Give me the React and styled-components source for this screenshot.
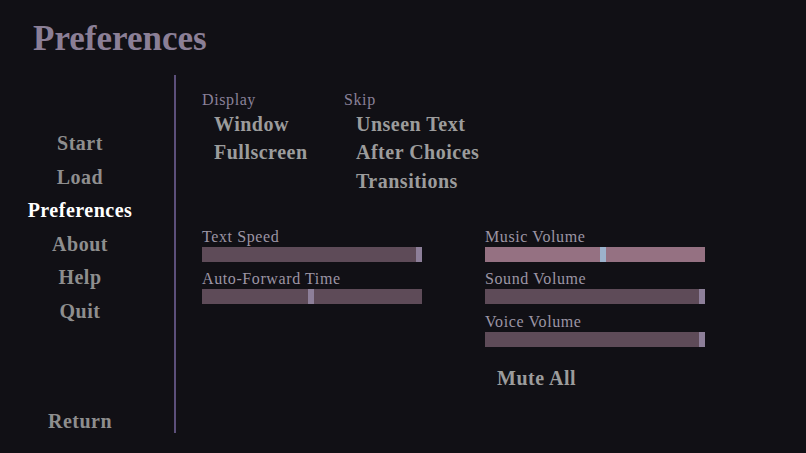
import React from "react";
import styled, { createGlobalStyle } from "styled-components";

const Global = createGlobalStyle`
  html, body { margin: 0; padding: 0; background: #111015; }
  #root { width: 806px; height: 453px; }
`;

const Screen = styled.div`
  width: 806px;
  height: 453px;
  background: #111015;
  font-family: "Liberation Serif", "Times New Roman", serif;
  display: flex;
  flex-direction: column;
  overflow: hidden;
`;

const Title = styled.h1`
  margin: 0;
  padding: 19px 0 0 33px;
  height: 75px;
  flex: none;
  box-sizing: border-box;
  font-size: 35px;
  line-height: 40px;
  font-weight: bold;
  color: #8b7f96;
`;

const Body = styled.div`
  flex: 1;
  display: flex;
  align-items: flex-start;
`;

const Nav = styled.nav`
  width: 160px;
  height: 378px;
  box-sizing: border-box;
  padding: 52px 0 15px;
  display: flex;
  flex-direction: column;
  align-items: center;
`;

const NavItem = styled.div`
  font-size: 20px;
  line-height: 33.5px;
  font-weight: bold;
  letter-spacing: 0.5px;
  color: ${(p) => (p.$active ? "#ffffff" : "#8e8e8e")};
`;

const NavBottom = styled.div`
  margin-top: auto;
`;

const Divider = styled.div`
  width: 2px;
  height: 358px;
  margin-left: 14px;
  background: #5c4f7a;
`;

const Content = styled.div`
  margin-left: 26px;
  padding-top: 14.6px;
  display: flex;
  flex-direction: column;
`;

const Groups = styled.div`
  display: grid;
  grid-template-columns: 142px auto;
`;

const Group = styled.div`
  display: flex;
  flex-direction: column;
`;

const Label = styled.div`
  font-size: 16px;
  line-height: 20px;
  letter-spacing: 0.6px;
  color: ${(p) => (p.$muted ? "#8a8199" : "#9c95a4")};
`;

const Option = styled.div`
  font-size: 20px;
  line-height: 28.5px;
  font-weight: bold;
  letter-spacing: 0.5px;
  padding-left: 12px;
  color: #9c9c9c;
`;

const Sliders = styled.div`
  margin-top: 31.5px;
  display: grid;
  grid-template-columns: 220px 220px;
  column-gap: 63px;
  align-items: start;
`;

const SliderCol = styled.div`
  display: flex;
  flex-direction: column;
  gap: 7.5px;
`;

const SliderRow = styled.div`
  display: flex;
  flex-direction: column;
`;

const Bar = styled.div`
  position: relative;
  height: 15px;
  background: ${(p) => (p.$hover ? "#957182" : "#5e4b58")};
`;

const Thumb = styled.div`
  position: absolute;
  top: 0;
  bottom: 0;
  width: 6px;
  background: ${(p) => (p.$hover ? "#9cb2cc" : "#8d7f99")};
`;

const MuteAll = styled(Option)`
  margin-top: 9.6px;
`;

function Slider({ label, value, hover }) {
  return (
    <SliderRow>
      <Label>{label}</Label>
      <Bar $hover={hover}>
        <Thumb $hover={hover} style={{ left: `${value * 214}px` }} />
      </Bar>
    </SliderRow>
  );
}

export default function App() {
  return (
    <>
      <Global />
      <Screen>
        <Title>Preferences</Title>
        <Body>
          <Nav>
            <NavItem>Start</NavItem>
            <NavItem>Load</NavItem>
            <NavItem $active>Preferences</NavItem>
            <NavItem>About</NavItem>
            <NavItem>Help</NavItem>
            <NavItem>Quit</NavItem>
            <NavBottom>
              <NavItem>Return</NavItem>
            </NavBottom>
          </Nav>
          <Divider />
          <Content>
            <Groups>
              <Group>
                <Label $muted>Display</Label>
                <Option>Window</Option>
                <Option>Fullscreen</Option>
              </Group>
              <Group>
                <Label $muted>Skip</Label>
                <Option>Unseen Text</Option>
                <Option>After Choices</Option>
                <Option>Transitions</Option>
              </Group>
            </Groups>
            <Sliders>
              <SliderCol>
                <Slider label="Text Speed" value={1} />
                <Slider label="Auto-Forward Time" value={0.495} />
              </SliderCol>
              <SliderCol>
                <Slider label="Music Volume" value={0.537} hover />
                <Slider label="Sound Volume" value={1} />
                <Slider label="Voice Volume" value={1} />
                <MuteAll>Mute All</MuteAll>
              </SliderCol>
            </Sliders>
          </Content>
        </Body>
      </Screen>
    </>
  );
}
